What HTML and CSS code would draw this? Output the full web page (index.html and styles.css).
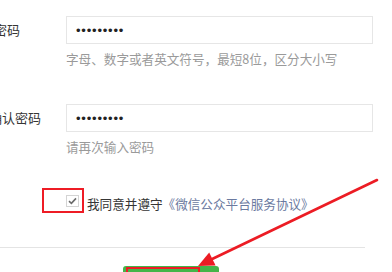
FILE: index.html
```html
<!DOCTYPE html>
<html lang="zh-CN">
<head>
    <meta charset="UTF-8">
    <meta name="viewport" content="width=device-width, initial-scale=1.0">
    <title>注册</title>
    <link rel="stylesheet" href="styles.css">
</head>
<body>
    <div class="page">
        <div class="form">
            <div class="row">
                <label class="label label-short">密码</label>
                <div class="field">
                    <div class="input"><span class="dots">•••••••••</span></div>
                    <p class="hint">字母、数字或者英文符号，最短8位，区分大小写</p>
                </div>
            </div>
            <div class="row row-second">
                <label class="label">确认密码</label>
                <div class="field">
                    <div class="input"><span class="dots">•••••••••</span></div>
                    <p class="hint">请再次输入密码</p>
                </div>
            </div>
            <div class="agree">
                <div class="mark-box">
                    <span class="checkbox">
                        <svg width="9" height="8" viewBox="0 0 9 8">
                            <path d="M1 4.2 L3.4 6.4 L8 1.4" fill="none" stroke="#6b6b6b" stroke-width="1.6"/>
                        </svg>
                    </span>
                </div>
                <p class="agree-text">我同意并遵守<a href="#">《微信公众平台服务协议》</a></p>
            </div>
        </div>
        <div class="footer">
            <button class="submit"><span class="mark-btn"></span></button>
        </div>

        <!-- annotation arrow -->
        <svg class="arrow" width="392" height="272" viewBox="0 0 392 272">
            <line x1="377" y1="180" x2="208" y2="261" stroke="#ec1c24" stroke-width="2.6" stroke-linecap="round"/>
            <polygon points="198,266 215.6,265.6 209.2,252.6" fill="#ec1c24"/>
        </svg>
    </div>
</body>
</html>
```

FILE: styles.css
```css
body {
    margin: 0;
    background-color: #fff;
    font-family: "Noto Sans CJK SC", "Liberation Sans", sans-serif;
    color: #353535;
}

.page {
    position: relative;
    width: 392px;
    height: 272px;
    overflow: hidden;
}

.form {
    padding-top: 16px;
}

.row {
    display: flex;
}

.row-second {
    margin-top: 36px;
}

.label {
    width: 77px;
    margin-left: -11px;
    font-size: 13px;
    line-height: 28px;
    color: #353535;
}

.label-short {
    padding-left: 5px;
    width: 72px;
}

.field {
    width: 307px;
}

.input {
    box-sizing: border-box;
    height: 28px;
    border: 1px solid #e6e6e6;
    padding-left: 9px;
    display: flex;
    align-items: center;
}

.dots {
    font-family: "Liberation Sans", sans-serif;
    font-size: 13px;
    letter-spacing: 0.8px;
    color: #222;
    line-height: 1;
}

.hint {
    margin: 6px 0 0;
    font-size: 12.6px;
    line-height: 18px;
    color: #9a9a9a;
    white-space: nowrap;
}

.agree {
    display: flex;
    margin-top: 32px;
    margin-left: 42px;
}

.mark-box {
    box-sizing: border-box;
    width: 42px;
    height: 25px;
    border: 2px solid #ee1c25;
    display: flex;
    align-items: center;
    justify-content: flex-end;
    padding-right: 3px;
}

.checkbox {
    box-sizing: border-box;
    width: 13px;
    height: 12px;
    border: 1px solid #d4d4d4;
    display: flex;
    align-items: center;
    justify-content: center;
}

.agree-text {
    margin: 7px 0 0 3px;
    font-size: 12.6px;
    line-height: 18px;
    color: #353535;
    white-space: nowrap;
}

.agree-text a {
    color: #6b7aa0;
    text-decoration: none;
}

.footer {
    width: 365px;
    margin-top: 34px;
    border-top: 1px solid #e4e4e4;
    padding-top: 18px;
}

.submit {
    position: relative;
    display: block;
    margin-left: 123px;
    width: 96px;
    height: 30px;
    border: none;
    border-radius: 3px;
    background-color: #44b549;
    padding: 0;
}

.mark-btn {
    position: absolute;
    left: 3px;
    top: 1px;
    width: 74px;
    height: 28px;
    box-sizing: border-box;
    border: 2px solid #ee1c25;
}

.arrow {
    position: absolute;
    left: 0;
    top: 0;
}
```
